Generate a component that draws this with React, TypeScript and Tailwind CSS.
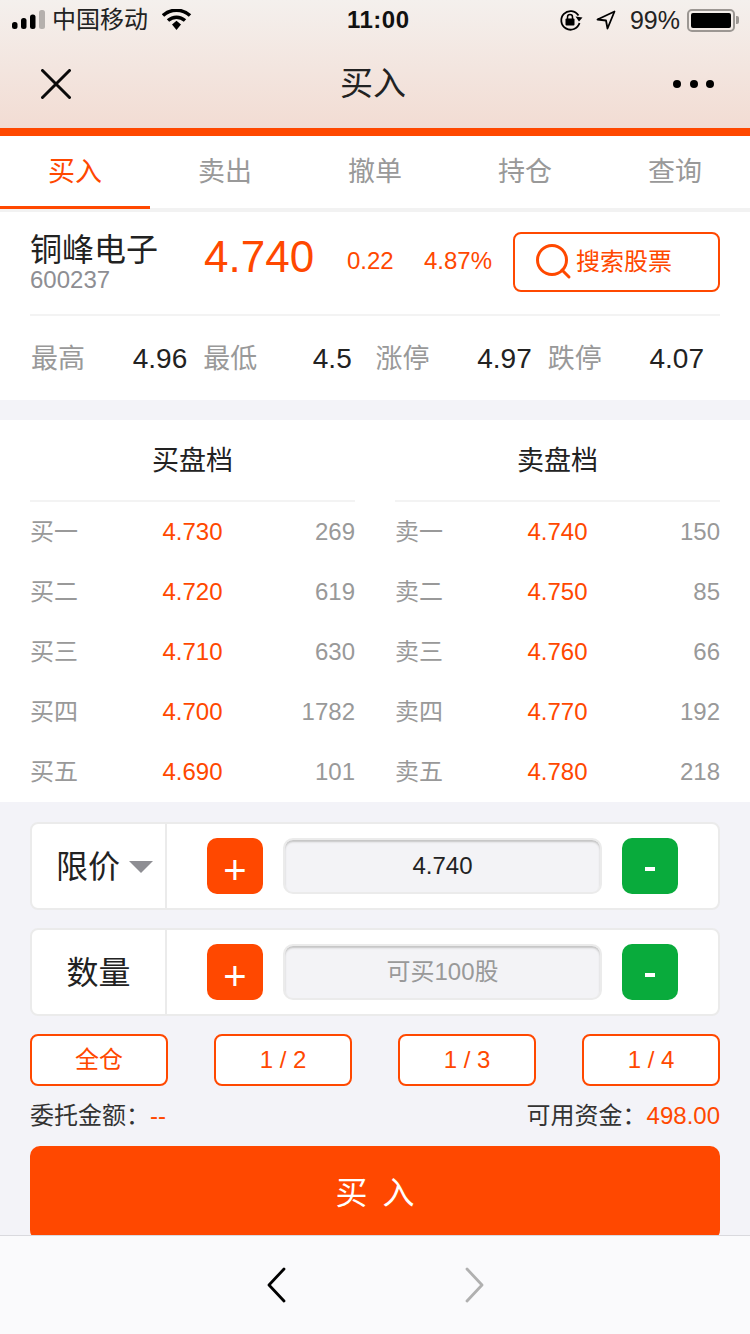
import React from 'react';

const FONT = 'font-["Liberation_Sans","Noto_Sans_CJK_SC",sans-serif]';

const tabs = ['买入', '卖出', '撤单', '持仓', '查询'];

const quotes = [
  { label: '最高', value: '4.96' },
  { label: '最低', value: '4.5' },
  { label: '涨停', value: '4.97' },
  { label: '跌停', value: '4.07' },
];

const buyRows = [
  ['买一', '4.730', '269'],
  ['买二', '4.720', '619'],
  ['买三', '4.710', '630'],
  ['买四', '4.700', '1782'],
  ['买五', '4.690', '101'],
];

const sellRows = [
  ['卖一', '4.740', '150'],
  ['卖二', '4.750', '85'],
  ['卖三', '4.760', '66'],
  ['卖四', '4.770', '192'],
  ['卖五', '4.780', '218'],
];

function StatusBar() {
  return (
    <div className="relative flex h-[40px] items-center justify-between pl-[12px] pr-[11px] text-black">
      <div className="flex items-center">
        <svg width="34" height="20" viewBox="0 0 34 20" className="mr-[6px]">
          <rect x="0" y="12" width="5.500" height="7" rx="2.500" fill="#000" />
          <rect x="9" y="8" width="5.500" height="11" rx="2.500" fill="#000" />
          <rect x="18" y="4.500" width="5.500" height="14.500" rx="2.500" fill="#000" />
          <rect x="27" y="0" width="6" height="19" rx="2.500" fill="#b5b0ad" />
        </svg>
        <span className="text-[24px] leading-[28px] text-[#222]">中国移动</span>
        <svg width="30" height="22" viewBox="0 0 30 22" className="ml-[14px]">
          <path d="M1 6.500C8.500 -0.500 20.500 -0.500 28 6.500" fill="none" stroke="#000" strokeWidth="3.500" />
          <path d="M6 11.500C11 7 18 7 23 11.500" fill="none" stroke="#000" strokeWidth="3.500" />
          <path d="M10 15.500L14.500 11.800L19 15.500L14.500 21Z" fill="#000" />
        </svg>
      </div>
      <span className="absolute left-[347px] top-[5px] text-[24px] font-bold leading-[30px] tracking-[0.5px] text-[#111]">11:00</span>
      <div className="flex items-center">
        <svg width="24" height="24" viewBox="0 0 24 24" className="mr-[13px]">
          <path d="M19.500 7.500A9.300 9.300 0 1 0 20.500 15" fill="none" stroke="#000" strokeWidth="1.800" />
          <path d="M16.500 8.500L23.500 9.500L20 13.500Z" fill="#000" />
          <rect x="6.500" y="10.500" width="9" height="7" rx="1" fill="#000" />
          <path d="M8.500 11V9a2.500 2.500 0 0 1 5 0v2" fill="none" stroke="#000" strokeWidth="1.500" />
        </svg>
        <svg width="20" height="20" viewBox="0 0 20 20" className="mr-[14px]">
          <path d="M18.500 1.500L1.500 9.500L10 10.500L11.500 18.500Z" fill="none" stroke="#000" strokeWidth="1.800" strokeLinejoin="round" />
        </svg>
        <span className="mr-[7px] text-[25px] leading-[30px] text-[#222]">99%</span>
        <div className="flex items-center">
          <div className="h-[23px] w-[48px] rounded-[5px] border-2 border-[#9c9793] p-[2px]">
            <div className="h-full w-full rounded-[2px] bg-black" />
          </div>
          <div className="ml-[1px] h-[8px] w-[3px] rounded-r-[2px] bg-[#9c9793]" />
        </div>
      </div>
    </div>
  );
}

function NavBar() {
  return (
    <div className="relative flex h-[88px] items-center justify-between pl-[41px] pr-[36px]">
      <svg width="30" height="30" viewBox="0 0 30 30">
        <path d="M1.500 1.500L28.500 28.500M28.500 1.500L1.500 28.500" stroke="#0a0a0a" strokeWidth="3" strokeLinecap="round" />
      </svg>
      <span className="absolute left-[340px] top-[24px] text-[33px] leading-[40px] text-[#222]">买入</span>
      <div className="flex items-center gap-[8.500px]">
        <div className="h-[8px] w-[8px] rounded-full bg-black" />
        <div className="h-[8px] w-[8px] rounded-full bg-black" />
        <div className="h-[8px] w-[8px] rounded-full bg-black" />
      </div>
    </div>
  );
}

function Tabs() {
  return (
    <div className="flex h-[76px] border-b-4 border-[#f2f2f2] bg-white">
      {tabs.map((tab, i) => (
        <div
          key={tab}
          className={
            i === 0
              ? 'relative flex w-[150px] items-center justify-center text-[27px] text-[#ff4800]'
              : 'flex w-[150px] items-center justify-center text-[27px] text-[#999]'
          }
        >
          {tab}
          {i === 0 && <div className="absolute bottom-[-1px] left-0 h-[3px] w-full bg-[#ff4800]" />}
        </div>
      ))}
    </div>
  );
}

function StockInfo() {
  return (
    <div className="bg-white px-[30px]">
      <div className="flex h-[104px] items-start border-b-2 border-[#f3f3f3] pt-[20px]">
        <div className="w-[174px]">
          <div className="text-[32px] leading-[36px] text-[#222]">铜峰电子</div>
          <div className="mt-[-1px] text-[24px] leading-[26px] text-[#8e8e93]">600237</div>
        </div>
        <div className="w-[143px] text-[44px] leading-[50px] text-[#ff4800]">4.740</div>
        <div className="w-[77px] pt-[15px] text-[24px] leading-[28px] text-[#ff4800]">0.22</div>
        <div className="w-[89px] pt-[15px] text-[24px] leading-[28px] text-[#ff4800]">4.87%</div>
        <div className="flex h-[60px] w-[207px] items-center rounded-[8px] border-2 border-[#ff4800] pl-[19px]">
          <svg width="42" height="38" viewBox="0 0 42 38">
            <circle cx="18" cy="17" r="14.500" fill="none" stroke="#ff4800" strokeWidth="3" />
            <path d="M28 27L35 34" stroke="#ff4800" strokeWidth="3" strokeLinecap="round" />
          </svg>
          <span className="text-[24px] leading-[30px] text-[#ff4800]">搜索股票</span>
        </div>
      </div>
      <div className="flex h-[84px] items-center pl-[1px] pt-[2px]">
        {quotes.map((q) => (
          <div key={q.label} className="flex w-[172.500px] items-center">
            <span className="w-[86px] text-[27px] text-[#999]">{q.label}</span>
            <span className="w-[86px] text-center text-[28px] text-[#222]">{q.value}</span>
          </div>
        ))}
      </div>
    </div>
  );
}

function BookColumn({ title, rows }: { title: string; rows: string[][] }) {
  return (
    <div className="w-[325px]">
      <div className="flex h-[82px] items-center justify-center border-b-2 border-[#f3f3f3] pt-[2px] text-[27px] text-[#222]">
        {title}
      </div>
      {rows.map((row) => (
        <div key={row[0]} className="grid h-[60px] grid-cols-3 items-center text-[24px]">
          <span className="text-[#999]">{row[0]}</span>
          <span className="text-center text-[#ff4800]">{row[1]}</span>
          <span className="text-right text-[#999]">{row[2]}</span>
        </div>
      ))}
    </div>
  );
}

function OrderBook() {
  return (
    <div className="flex h-[382px] justify-between overflow-hidden bg-white px-[30px]">
      <BookColumn title="买盘档" rows={buyRows} />
      <BookColumn title="卖盘档" rows={sellRows} />
    </div>
  );
}

function Stepper({ children, value, muted }: { children: React.ReactNode; value: string; muted?: boolean }) {
  return (
    <div className="flex h-[88px] items-center rounded-[8px] border-2 border-[#ebebeb] bg-white">
      {children}
      <div className="ml-[40px] flex h-[56px] w-[56px] items-center justify-center rounded-[10px] bg-[#ff4800] pt-[7px] text-[40px] leading-none text-white">
        +
      </div>
      <div
        className={
          muted
            ? 'ml-[20px] flex h-[56px] w-[319px] items-center justify-center rounded-[10px] border-2 border-[#ebebeb] bg-[#f3f3f6] text-[24px] text-[#999] shadow-[inset_0_2px_2px_#c4c4c4]'
            : 'ml-[20px] flex h-[56px] w-[319px] items-center justify-center rounded-[10px] border-2 border-[#ebebeb] bg-[#f3f3f6] text-[24px] text-[#222] shadow-[inset_0_2px_2px_#c4c4c4]'
        }
      >
        {value}
      </div>
      <div className="ml-[20px] flex h-[56px] w-[56px] items-center justify-center rounded-[10px] bg-[#09ab3c]">
        <div className="mt-[6px] h-[4px] w-[10px] bg-white" />
      </div>
    </div>
  );
}

function OrderForm() {
  return (
    <div className="h-[433px] overflow-hidden bg-[#f3f3f8] px-[30px] pt-[20px]">
      <Stepper value="4.740">
        <div className="flex h-full w-[135px] items-center border-r-2 border-[#ebebeb] pl-[24px]">
          <span className="pt-[2px] text-[32px] text-[#222]">限价</span>
          <svg width="24" height="12" viewBox="0 0 24 12" className="ml-[9px] mt-[2px]">
            <path d="M0 0H24L12 12Z" fill="#8e8e93" />
          </svg>
        </div>
      </Stepper>
      <div className="mt-[18px]">
        <Stepper value="可买100股" muted>
          <div className="flex h-full w-[135px] items-center justify-center border-r-2 border-[#ebebeb]">
            <span className="pt-[2px] text-[32px] text-[#222]">数量</span>
          </div>
        </Stepper>
      </div>
      <div className="mt-[18px] flex justify-between">
        {['全仓', '1 / 2', '1 / 3', '1 / 4'].map((label) => (
          <div
            key={label}
            className="flex h-[52px] w-[138px] items-center justify-center rounded-[8px] border-2 border-[#ff4800] bg-white text-[24px] text-[#ff4800]"
          >
            {label}
          </div>
        ))}
      </div>
      <div className="mt-[15px] flex h-[30px] items-center justify-between text-[24px] leading-[30px] text-[#333]">
        <div>
          委托金额：<span className="text-[#ff4800]">--</span>
        </div>
        <div>
          可用资金：<span className="text-[#ff4800]">498.00</span>
        </div>
      </div>
      <div className="mt-[15px] flex h-[94px] items-center justify-center rounded-[10px] bg-[#ff4800] pl-[3px] text-[32px] tracking-[3px] text-white">
        买 入
      </div>
    </div>
  );
}

function BottomBar() {
  return (
    <div className="flex h-[99px] items-center justify-center gap-[179px] border-t border-[#d9d9de] bg-[#fafafc]">
      <svg width="20" height="36" viewBox="0 0 20 36">
        <path d="M18 2L3 18L18 34" fill="none" stroke="#000" strokeWidth="2.800" strokeLinecap="round" strokeLinejoin="round" />
      </svg>
      <svg width="20" height="36" viewBox="0 0 20 36">
        <path d="M2 2L17 18L2 34" fill="none" stroke="#b0b0b0" strokeWidth="2.800" strokeLinecap="round" strokeLinejoin="round" />
      </svg>
    </div>
  );
}

export default function App() {
  return (
    <div className={`${FONT} flex h-[1334px] w-[750px] flex-col overflow-hidden bg-white`}>
      <div className="h-[128px] bg-gradient-to-b from-[#f4f0ed] to-[#f2dcd3]">
        <StatusBar />
        <NavBar />
      </div>
      <div className="h-[8px] bg-[#ff4800]" />
      <Tabs />
      <StockInfo />
      <div className="h-[20px] bg-[#f3f3f8]" />
      <OrderBook />
      <OrderForm />
      <BottomBar />
    </div>
  );
}
